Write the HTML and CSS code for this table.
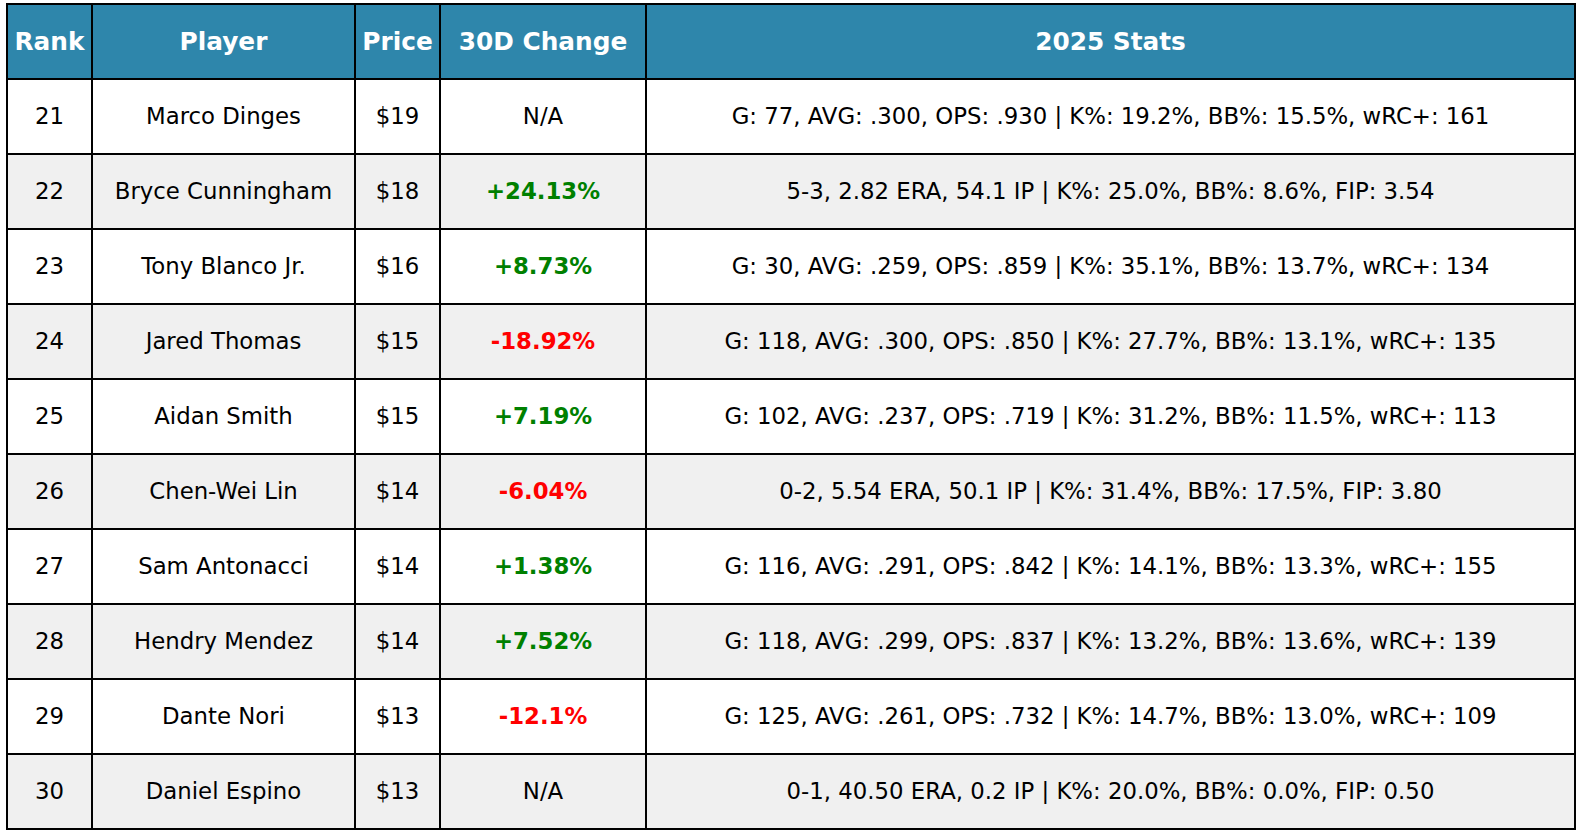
FILE: index.html
```html
<!DOCTYPE html>
<html>
<head>
<meta charset="utf-8">
<link rel="stylesheet" href="styles.css">
</head>
<body>
<div class="table">
  <div class="cell head">Rank</div><div class="cell head">Player</div><div class="cell head">Price</div><div class="cell head">30D Change</div><div class="cell head">2025 Stats</div>

  <div class="cell">21</div><div class="cell">Marco Dinges</div><div class="cell">$19</div><div class="cell">N/A</div><div class="cell">G: 77, AVG: .300, OPS: .930 | K%: 19.2%, BB%: 15.5%, wRC+: 161</div>

  <div class="cell alt">22</div><div class="cell alt">Bryce Cunningham</div><div class="cell alt">$18</div><div class="cell alt up">+24.13%</div><div class="cell alt">5-3, 2.82 ERA, 54.1 IP | K%: 25.0%, BB%: 8.6%, FIP: 3.54</div>

  <div class="cell">23</div><div class="cell">Tony Blanco Jr.</div><div class="cell">$16</div><div class="cell up">+8.73%</div><div class="cell">G: 30, AVG: .259, OPS: .859 | K%: 35.1%, BB%: 13.7%, wRC+: 134</div>

  <div class="cell alt">24</div><div class="cell alt">Jared Thomas</div><div class="cell alt">$15</div><div class="cell alt down">-18.92%</div><div class="cell alt">G: 118, AVG: .300, OPS: .850 | K%: 27.7%, BB%: 13.1%, wRC+: 135</div>

  <div class="cell">25</div><div class="cell">Aidan Smith</div><div class="cell">$15</div><div class="cell up">+7.19%</div><div class="cell">G: 102, AVG: .237, OPS: .719 | K%: 31.2%, BB%: 11.5%, wRC+: 113</div>

  <div class="cell alt">26</div><div class="cell alt">Chen-Wei Lin</div><div class="cell alt">$14</div><div class="cell alt down">-6.04%</div><div class="cell alt">0-2, 5.54 ERA, 50.1 IP | K%: 31.4%, BB%: 17.5%, FIP: 3.80</div>

  <div class="cell">27</div><div class="cell">Sam Antonacci</div><div class="cell">$14</div><div class="cell up">+1.38%</div><div class="cell">G: 116, AVG: .291, OPS: .842 | K%: 14.1%, BB%: 13.3%, wRC+: 155</div>

  <div class="cell alt">28</div><div class="cell alt">Hendry Mendez</div><div class="cell alt">$14</div><div class="cell alt up">+7.52%</div><div class="cell alt">G: 118, AVG: .299, OPS: .837 | K%: 13.2%, BB%: 13.6%, wRC+: 139</div>

  <div class="cell">29</div><div class="cell">Dante Nori</div><div class="cell">$13</div><div class="cell down">-12.1%</div><div class="cell">G: 125, AVG: .261, OPS: .732 | K%: 14.7%, BB%: 13.0%, wRC+: 109</div>

  <div class="cell alt">30</div><div class="cell alt">Daniel Espino</div><div class="cell alt">$13</div><div class="cell alt">N/A</div><div class="cell alt">0-1, 40.50 ERA, 0.2 IP | K%: 20.0%, BB%: 0.0%, FIP: 0.50</div>
</div>
</body>
</html>
```

FILE: styles.css
```css
html, body {
  margin: 0;
  padding: 0;
  background: #ffffff;
}

body {
  font-family: "DejaVu Sans", sans-serif;
}

.table {
  display: grid;
  grid-template-columns: 83px 261px 83px 204px 927px;
  grid-template-rows: 73px repeat(10, 73px);
  gap: 2px;
  padding: 2px;
  background: #000000;
  width: max-content;
  margin: 3px 0 0 6px;
}

.cell {
  display: flex;
  align-items: center;
  justify-content: center;
  padding-bottom: 2px;
  background: #ffffff;
  color: #000000;
  font-size: 22.8px;
  white-space: nowrap;
  overflow: hidden;
}

.cell.alt {
  background: #f0f0f0;
}

.cell.head {
  padding-bottom: 0;
  background: #2e86ab;
  color: #ffffff;
  font-weight: bold;
  font-size: 24.8px;
}

.cell.up {
  color: #008000;
  font-weight: bold;
}

.cell.down {
  color: #ff0000;
  font-weight: bold;
}
```
